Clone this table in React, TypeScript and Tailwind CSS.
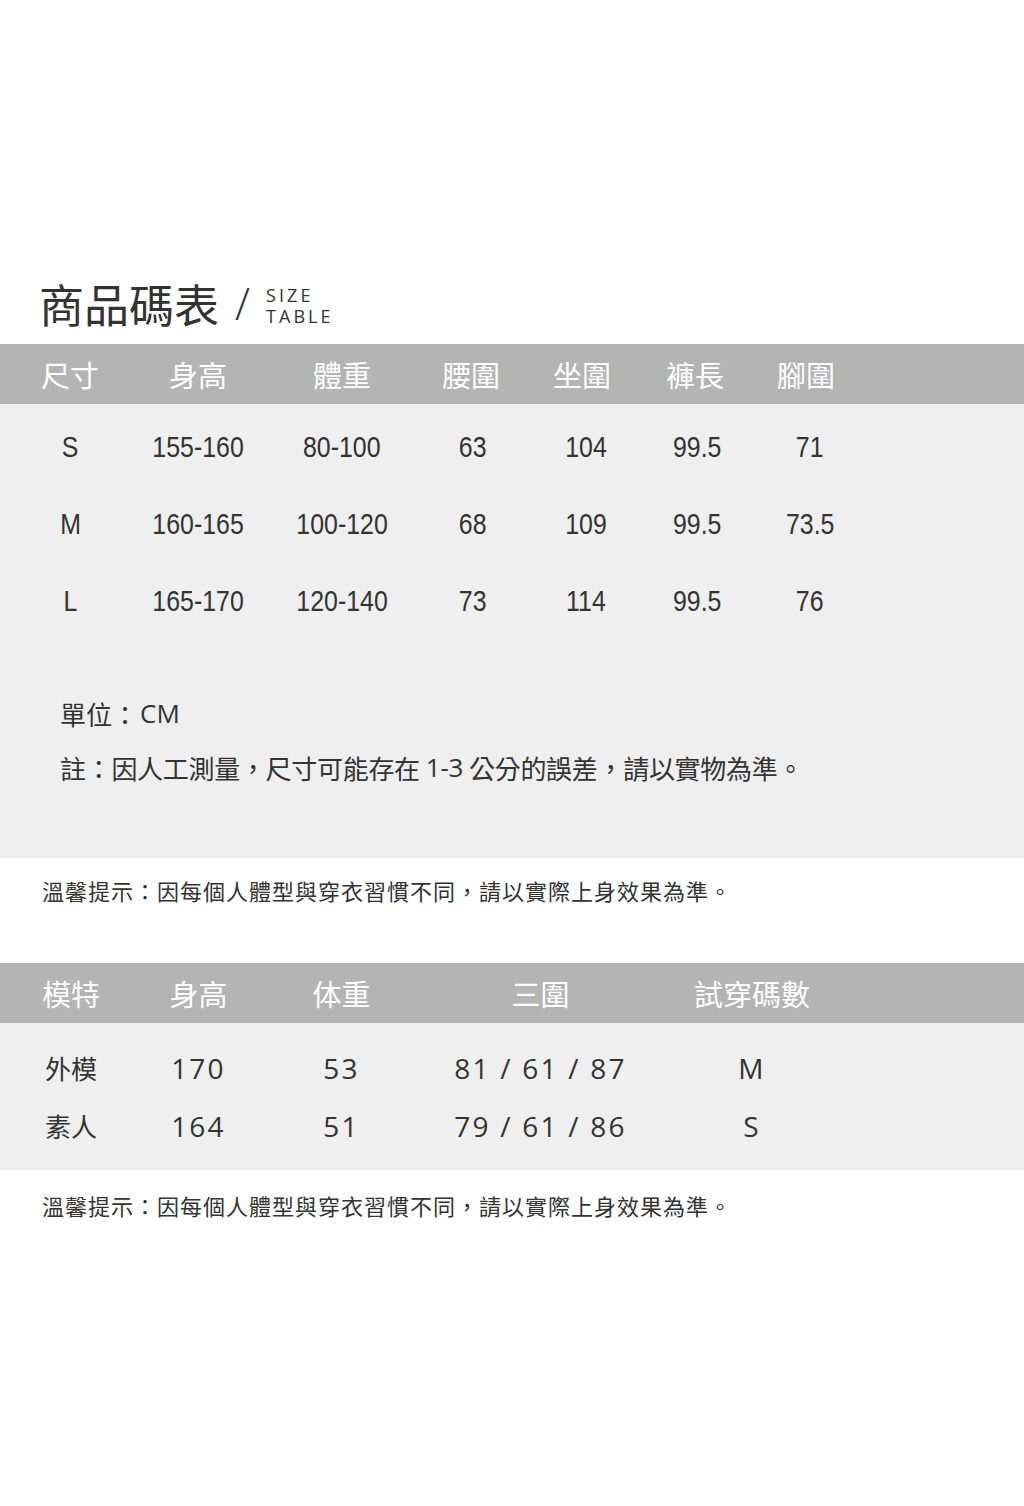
const cjk = "font-['Noto_Sans_CJK_TC','Noto_Sans_CJK_SC',sans-serif]";
const arial = "font-['Liberation_Sans',Arial,sans-serif]";
const open = "font-['Open_Sans','Noto_Sans',sans-serif]";

const sizeHeadCols = ["w-[140px]", "w-[116px]", "w-[172px]", "w-[86px]", "w-[136px]", "w-[90px]", "w-[132px]"];
const sizeCols = ["w-[140px]", "w-[116px]", "w-[172px]", "w-[90px]", "w-[136px]", "w-[86px]", "w-[140px]"];
const sizeHead = ["尺寸", "身高", "體重", "腰圍", "坐圍", "褲長", "腳圍"];
const sizeRows = [
  ["S", "155-160", "80-100", "63", "104", "99.5", "71"],
  ["M", "160-165", "100-120", "68", "109", "99.5", "73.5"],
  ["L", "165-170", "120-140", "73", "114", "99.5", "76"],
];

const modelCols = ["w-[142px]", "w-[113px]", "w-[173px]", "w-[225px]", "w-[198px]"];
const modelHead = ["模特", "身高", "体重", "三圍", "試穿碼數"];
const modelRows = [
  ["外模", "170", "53", "81 / 61 / 87", "M"],
  ["素人", "164", "51", "79 / 61 / 86", "S"],
];

function Tip() {
  return (
    <p className={`${cjk} pl-[42px] text-[22px] leading-none tracking-[1px] text-[#333]`}>
      溫馨提示：因每個人體型與穿衣習慣不同，請以實際上身效果為準。
    </p>
  );
}

export default function App() {
  return (
    <div className="min-h-[1506px] w-[1024px] bg-white text-[#333]">
      <div className="pt-[266px]">
        <div className="flex h-[74px] items-center pl-[39px]">
          <h1 className={`${cjk} text-[45px] leading-none text-[#333]`}>商品碼表</h1>
          <span className={`${open} ml-[16px] mr-[16px] text-[44px] font-light leading-none text-[#333]`}>/</span>
          <div className={`${open} mt-[4px] flex flex-col gap-[1px] text-[18px] leading-[20px] tracking-[0.17em] text-[#333]`}>
            <span className="block h-[20px]">SIZE</span>
            <span className="block h-[20px]">TABLE</span>
          </div>
        </div>
      </div>

      {/* size table */}
      <div className="mt-[4px] flex h-[60px] items-center bg-[#b4b4b4]">
        {sizeHead.map((h, i) => (
          <div key={h} className={`${sizeHeadCols[i]} ${cjk} text-center text-[29px] leading-none text-white`}>
            {h}
          </div>
        ))}
      </div>
      <div className="bg-[#efefef] pt-[4px] pb-[64px]">
        {sizeRows.map((row) => (
          <div key={row[0]} className="flex h-[77px] items-center">
            {row.map((c, i) => (
              <div key={i} className={`${sizeCols[i]} ${arial} text-center text-[30px] leading-none text-[#333]`}>
                <span className="inline-block scale-x-[0.83]">{c}</span>
              </div>
            ))}
          </div>
        ))}
        <div className={`${cjk} mt-[47px] pl-[60px] text-[26px] text-[#333]`}>
          <div className="flex h-[54px] items-center">
            單位：<span className={`${open} ml-[2px]`}>CM</span>
          </div>
          <div className="flex h-[54px] items-center tracking-[-0.3px]">
            註：因人工測量，尺寸可能存在 <span className={`${open} mx-[6px]`}>1-3</span> 公分的誤差，請以實物為準。
          </div>
        </div>
      </div>

      <div className="flex h-[64px] items-center">
        <Tip />
      </div>

      {/* model table */}
      <div className="mt-[41px] flex h-[60px] items-center bg-[#b4b4b4]">
        {modelHead.map((h, i) => (
          <div key={h} className={`${modelCols[i]} ${cjk} text-center text-[29px] leading-none text-white`}>
            {h}
          </div>
        ))}
      </div>
      <div className="bg-[#efefef] pt-[16px] pb-[15px]">
        {modelRows.map((row) => (
          <div key={row[0]} className="flex h-[58px] items-center">
            {row.map((c, i) => (
              <div
                key={i}
                className={`${modelCols[i]} ${i === 0 ? `${cjk} text-[26px]` : `${open} text-[28px] tracking-[0.08em]`} text-center leading-none text-[#333]`}
              >
                {c}
              </div>
            ))}
          </div>
        ))}
      </div>

      <div className="flex h-[70px] items-center">
        <Tip />
      </div>
    </div>
  );
}
